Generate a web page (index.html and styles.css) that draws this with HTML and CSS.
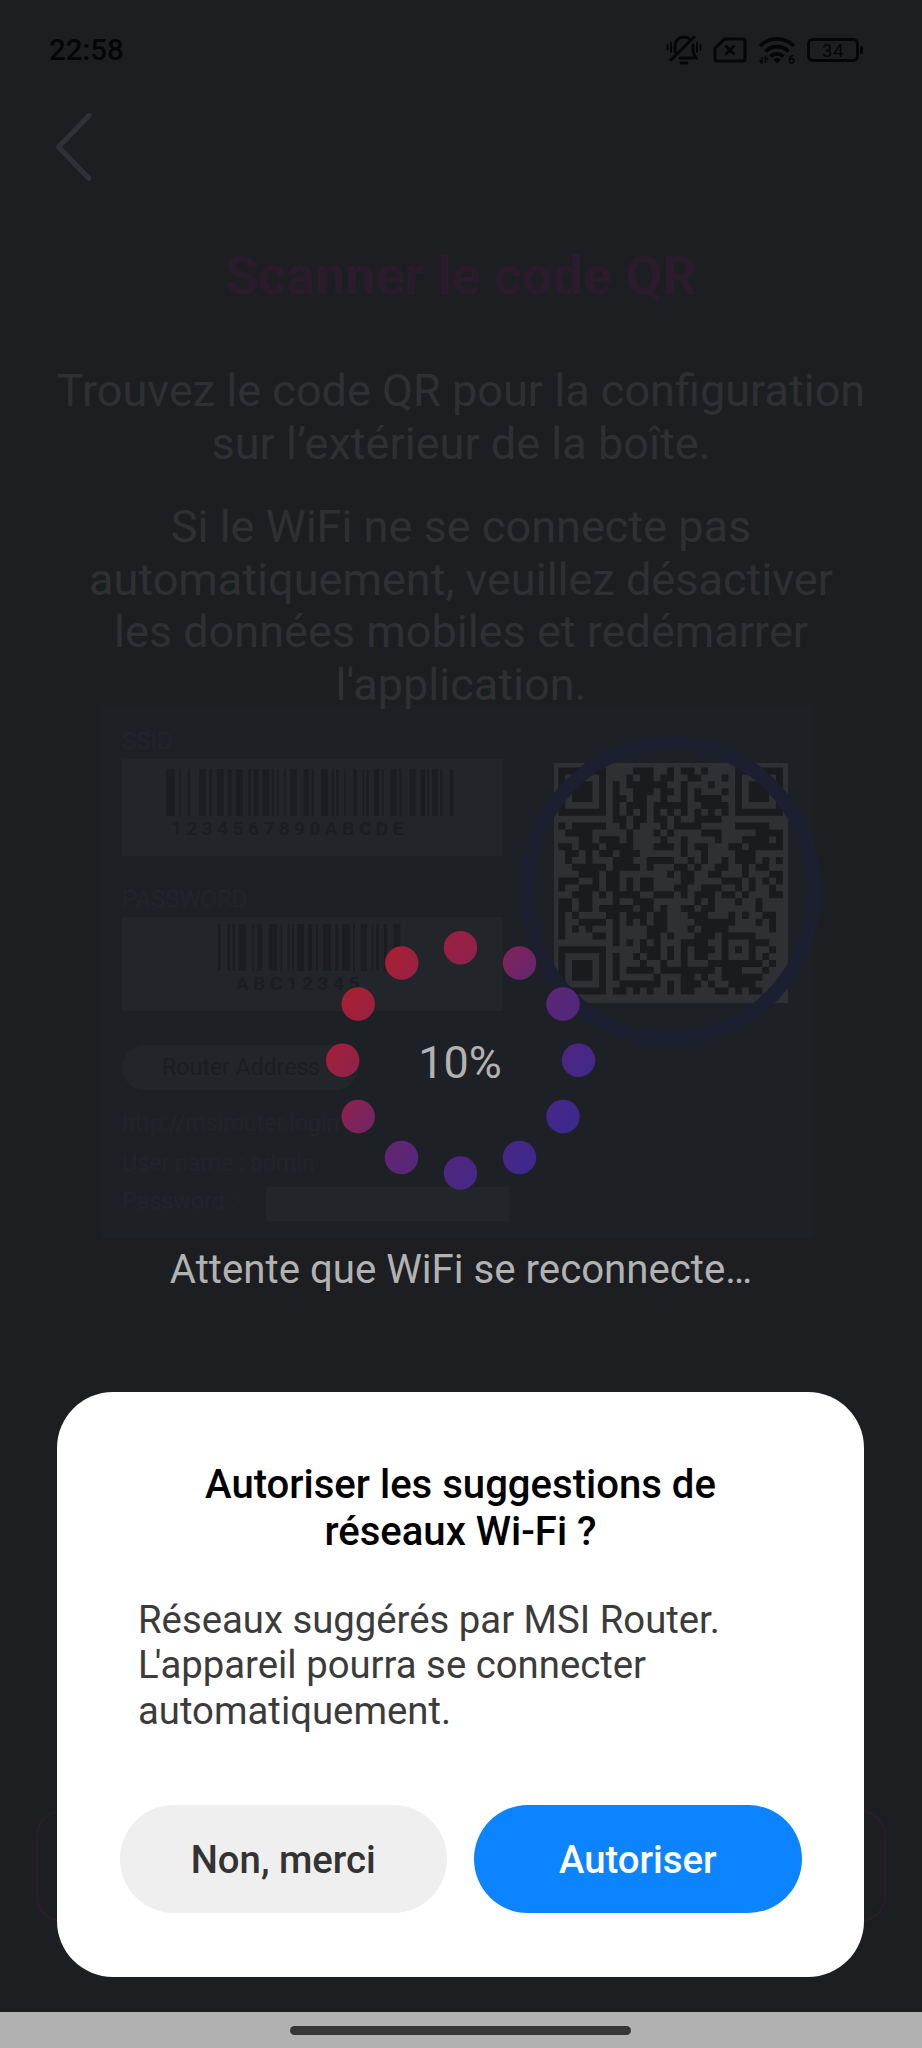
FILE: index.html
```html
<!DOCTYPE html>
<html lang="fr">
<head>
<meta charset="utf-8">
<title>Scanner le code QR</title>
<link rel="stylesheet" href="styles.css">
</head>
<body>
<main class="screen">
  <header class="status">
    <span class="clock">22:58</span>
    <div class="status-icons">
      <svg width="36" height="32" viewBox="0 0 36 32" fill="none" stroke="currentColor" stroke-width="2.900" stroke-linecap="round">
        <path d="M9 18V12C9 6.500 13 3 18 3c2.500 0 4.500.8 6 2.200M27 11v7l3 6H14M5 26 28 3M15 29h6"/>
        <path d="M5 9v9M1.500 11.500v4M31 9v9M34.500 11.500v4" stroke-width="2"/>
      </svg>
      <svg width="34" height="26" viewBox="0 0 34 26" fill="none" stroke="currentColor" stroke-width="3.100" stroke-linejoin="round">
        <path d="M11.500 2H30q2 0 2 2v18q0 2-2 2H4q-2 0-2-2V11.500Z"/>
        <path d="m12.500 8.500 9 9m0-9-9 9" stroke-width="3"/>
      </svg>
      <svg class="wifi" width="38" height="30" viewBox="0 0 38 30" fill="none" stroke="currentColor" stroke-width="3.800">
        <path d="M2 11a24 24 0 0 1 34 0M7.500 16.500a16 16 0 0 1 23 0M12.500 21.500a9.500 9.500 0 0 1 13 0"/>
        <path d="m15 24.500 4 4 4-4a6 6 0 0 0-8 0Z" fill="currentColor" stroke="none"/>
        <path d="M4 22v6l-2.500-2.500M7.500 28v-6l2.500 2.500" stroke-width="1.500"/>
        <text class="wifi-gen" x="30" y="29">6</text>
      </svg>
      <div class="battery"><span>34</span></div>
    </div>
  </header>

  <svg class="back" width="40" height="72" viewBox="0 0 40 72" fill="none" stroke="#303136" stroke-width="5" stroke-linecap="round" stroke-linejoin="round"><path d="M35 4.500 4.500 36 35 67.500"/></svg>

  <h1 class="title">Scanner le code QR</h1>
  <p class="intro">Trouvez le code QR pour la configuration<br>sur l’extérieur de la boîte.</p>
  <p class="intro">Si le WiFi ne se connecte pas<br>automatiquement, veuillez désactiver<br>les données mobiles et redémarrer<br>l'application.</p>

  <section class="label">
    <div class="label-info">
      <div class="caption">SSID</div>
      <div class="code code-ssid">
        <svg class="bars" id="bars-ssid" width="288" height="47" viewBox="228 0 864 140" preserveAspectRatio="none"></svg>
        <span>1234567890ABCDE</span>
      </div>
      <div class="caption caption-pass">PASSWORD</div>
      <div class="code code-pass">
        <svg class="bars" id="bars-pass" width="183" height="47" viewBox="385 0 549 140" preserveAspectRatio="none"></svg>
        <span>ABC12345</span>
      </div>
      <div class="pill">Router Address</div>
      <div class="line">http://msirouter.login</div>
      <div class="line">User name : admin</div>
      <div class="line line-pass"><span>Password :</span><i class="field"></i></div>
    </div>
    <svg class="qr" width="302" height="312" viewBox="0 0 302 312">
      <rect x="34" y="27" width="234" height="240" fill="#2f3034"/>
      <path id="qr-modules" fill="#1a1b1f" transform="translate(38.400 31.600) scale(6.800 6.870)"/>
      <ellipse cx="150.500" cy="155" rx="143.500" ry="148" fill="none" stroke="#1c1f30" stroke-width="14"/>
    </svg>
  </section>

  <p class="waiting">Attente que WiFi se reconnecte…</p>
  <div class="outline-button"></div>
  <footer class="navbar"><i class="handle"></i></footer>

  <div class="spinner">
    <svg width="272" height="262" viewBox="324 929 272 262">
      <defs>
        <linearGradient id="ring" gradientUnits="userSpaceOnUse" x1="365" y1="975" x2="555" y2="1145">
          <stop offset="0" stop-color="#a62034"/><stop offset=".25" stop-color="#92214a"/><stop offset=".5" stop-color="#642670"/><stop offset=".78" stop-color="#4c2781"/><stop offset="1" stop-color="#3d288e"/>
        </linearGradient>
      </defs>
      <g fill="url(#ring)">
        <circle cx="460.500" cy="947.700" r="16.700"/><circle cx="519.500" cy="963" r="16.700"/><circle cx="563" cy="1004" r="16.700"/>
        <circle cx="578.500" cy="1060.300" r="16.700"/><circle cx="563" cy="1116.500" r="16.700"/><circle cx="519.500" cy="1157.500" r="16.700"/>
        <circle cx="460.500" cy="1173" r="16.700"/><circle cx="401.500" cy="1157.500" r="16.700"/><circle cx="358.200" cy="1116.500" r="16.700"/>
        <circle cx="342.700" cy="1060.300" r="16.700"/><circle cx="358.200" cy="1004" r="16.700"/><circle cx="401.700" cy="963" r="16.700"/>
      </g>
    </svg>
    <span class="percent">10%</span>
  </div>

  <section class="dialog">
    <h2>Autoriser les suggestions de<br>réseaux Wi-Fi ?</h2>
    <p>Réseaux suggérés par MSI Router.<br><span class="kern">L</span>'appareil pourra se connecter<br>automatiquement.</p>
    <div class="actions">
      <button class="btn">Non, merci</button>
      <button class="btn primary">Autoriser</button>
    </div>
  </section>
</main>
<script src="codes.js"></script>
</body>
</html>
```
FILE: styles.css
```css
* { box-sizing: border-box; }
body { margin: 0; background: #1d1e22; font-family: Roboto, "Liberation Sans", sans-serif; }
h1, h2, p { margin: 0; }
svg { display: block; flex: none; }
.screen { position: relative; width: 922px; height: 2048px; overflow: hidden; display: flex; flex-direction: column; }

.status { height: 100px; padding: 0 58px 0 49px; display: flex; align-items: center; justify-content: space-between; color: #050608; }
.clock { font-size: 29.5px; font-weight: 500; }
.status-icons { display: flex; align-items: center; gap: 11px; }
.wifi { overflow: visible; }
.wifi-gen { font: 700 12px Roboto, sans-serif; fill: currentColor; stroke: none; }
.battery { position: relative; width: 52px; height: 24px; margin-right: 5px; border: 3px solid; border-radius: 6px; display: flex; align-items: center; justify-content: center; font-size: 19px; letter-spacing: .5px; }
.battery::after { content: ""; position: absolute; right: -7px; top: 5px; width: 3px; height: 8px; border-radius: 2px; background: currentColor; }

.back { margin: 11px 0 0 54px; }
.title { margin-top: 61px; font-size: 54px; line-height: 64px; font-weight: 700; letter-spacing: -.1px; text-align: center; color: #2a1c2d; }
.intro { position: relative; z-index: 1; font-size: 45.05px; line-height: 52.7px; text-align: center; color: #2f3034; white-space: nowrap; margin-top: 30.3px; }
.title + .intro { margin-top: 57.2px; }

.label { width: 710px; height: 533px; margin: -7.2px 0 0 102px; padding: 25px 0 0 20px; background: #1d2125; display: flex; flex: none; }
.label-info { width: 387px; flex: none; color: #22242a; font-size: 24px; }
.caption { height: 23px; line-height: 23px; margin-bottom: 6px; letter-spacing: -.1px; }
.code { width: 381px; background: #22262a; color: #1b1d21; font-size: 19px; font-weight: 700; }
.code span { display: block; line-height: 20px; white-space: nowrap; }
.code-ssid { height: 97px; padding: 10px 0 0 44px; }
.code-ssid span { margin: 3px 0 0 5px; letter-spacing: 4.5px; }
.caption-pass { margin-top: 32px; margin-bottom: 6px; }
.code-pass { height: 94px; padding: 7px 0 0 96px; }
.code-pass span { margin: 3px 0 0 18px; letter-spacing: 4.5px; }
.bars { fill: #1b1d21; }
.pill { width: 236px; height: 45px; margin: 34px 0 14px; padding-left: 40px; border-radius: 23px; background: #22262a; color: #1b1d21; font-size: 23.5px; line-height: 45px; letter-spacing: -.2px; }
.line { height: 40px; line-height: 39px; font-size: 23.5px; letter-spacing: -.15px; white-space: nowrap; }
.line-pass { display: flex; align-items: center; justify-content: space-between; margin-top: -2px; }
.field { width: 243px; height: 34px; background: #22262a; margin-top: 5px; }
.qr { margin: 6.5px 0 0 10.5px; }

.waiting { margin-top: 9px; font-size: 40.2px; line-height: 46px; text-align: center; color: #b2b2b3; }
.outline-button { height: 112px; margin: 517px 36px 0; border: 2px solid #281e2d; border-radius: 26px; flex: none; }
.navbar { margin-top: auto; height: 36px; background: #b1b1b1; display: flex; justify-content: center; padding: 14px 1px 0 0; }
.handle { width: 341px; height: 9px; border-radius: 5px; background: #363636; }

.spinner { position: absolute; left: 324px; top: 929px; width: 272px; height: 262px; }
.percent { position: absolute; inset: 0; display: flex; align-items: center; justify-content: center; padding: 5px 0 0 0; font-size: 45px; color: #b2b2b3; }

.dialog { position: absolute; left: 57px; top: 1391.5px; width: 807px; height: 585px; border-radius: 56px; background: #fff; padding: 69px 62.5px 0; }
.dialog h2 { font-size: 40.1px; line-height: 47px; font-weight: 500; text-align: center; color: #000; }
.dialog p { margin: 42.5px 0 0 18.5px; font-size: 38.3px; line-height: 45.3px; color: #3b3b3b; white-space: nowrap; }
.kern { letter-spacing: -4px; }
.actions { display: flex; gap: 27px; margin-top: 72.5px; }
.btn { flex: 1; height: 108px; border: 0; border-radius: 54px; background: #efefef; color: #333; font: 500 38.3px Roboto, sans-serif; padding: 1px 0 0; }
.primary { background: #0d84ff; color: #fff; }
```
FILE: codes.js
```js
// Each row lists the dark module runs as "first-last" column pairs.
const rows = [
  "0-6 11-13 16 18-19 21 26-32",
  "0 6 10 12-13 15-16 19-20 24 26 32",
  "0 2-4 6 8 10-13 14-15 18 22 26 28-30 32",
  "0 2-4 6 8 11-13 15-16 18 20 24 26 28-30 32",
  "0 2-4 6 8-9 11-12 15 18 20-23 26 28-30 32",
  "0 6 8 10-12 14-18 21-24 26 32",
  "0-6 8 10 12 14 16 18 20 22 24 26-32",
  "8-9 11-12 14-15 17 20-23",
  "0 2-6 9 11 15 17-20 26-30",
  "1-4 10 14 16 21-23 29-32",
  "3-4 6-8 10 15 18 23 27-30 32",
  "0-1 3-4 5 7-10 14-16 18 20-21 25-26 28-32",
  "1-2 4 6-7 9-11 18 21 26-28",
  "1 4 8-10 13-16 19 21 24 26-28 30 32",
  "2-6 8-11 13 17-18 20 23-24 27 29-30",
  "3-5 7-8 16 18-19 22-23 27 31-32",
  "0-2 5 7-8 10 12-13 18-19 24-26 28 30 32",
  "0 3-5 7-8 10 12-13 17-18 21-23 26 28 31",
  "2-4 6 8-11 14-16 18 20-22 24-25 27 31-32",
  "0-1 3-4 8 11-13 20 22 26 29",
  "0-1 3-4 6-10 12-13 15 18-19 21-22 29",
  "0 2 7-8 10-11 12 14-15 19-21 25 27 30-31",
  "0 3-6 8 10 12 14-15 20-25 29 31",
  "0 2 4 8 13-15 19 21-24 31",
  "0 5-6 8 13-14 16 20-22 24-28",
  "8 10 12 14 18-21 24 28 29-30",
  "0-6 12-14 16 18 20-22 24 26 28 31",
  "0 6 8 11 13-14 16 18 20-21 24 28 30",
  "0 2-4 6 8 12 15 18 22-28 29 31",
  "0 2-4 6 8 10-13 15-20 21-22 24-26 30",
  "0 2-4 6 8 14 18-19 21 24-29",
  "0 6 9-14 16 18-20 22 25-28",
  "0-6 8-9 11 13 16 18-19 23-24 26 28-29"
];
document.getElementById("qr-modules").setAttribute("d", rows.map((row, y) =>
  row.split(" ").map(run => {
    const [a, b = a] = run.split("-").map(Number);
    return `M${a} ${y}H${b + 1}v1.02H${a}Z`;
  }).join("")
).join(""));

const bars = {
  "bars-ssid": "228-254 268-273 293-300 327-348 358-366 380-401 414-425 438-458 475-482 491-506 517-538 545-551 561-566 581-587 600-620 641-656 666-672 693-713 725-732 738-746 763-767 790-801 817-822 830-836 852-867 876-881 901-920 928-934 958-977 992-1005 1012-1017 1026-1044 1050-1057 1080-1090",
  "bars-pass": "385-393 413-421 428-436 446-468 488-494 503-517 537-562 573-578 594-599 607-613 622-642 655-668 679-685 700-724 736-746 757-780 790-796 813-832 846-851 860-868 882-893 912-932"
};
for (const [id, list] of Object.entries(bars)) {
  const d = list.split(" ").map(b => { const [a, c] = b.split("-"); return `M${a} 0H${c}V140H${a}Z`; }).join("");
  document.getElementById(id).innerHTML = `<path d="${d}"/>`;
}
```
